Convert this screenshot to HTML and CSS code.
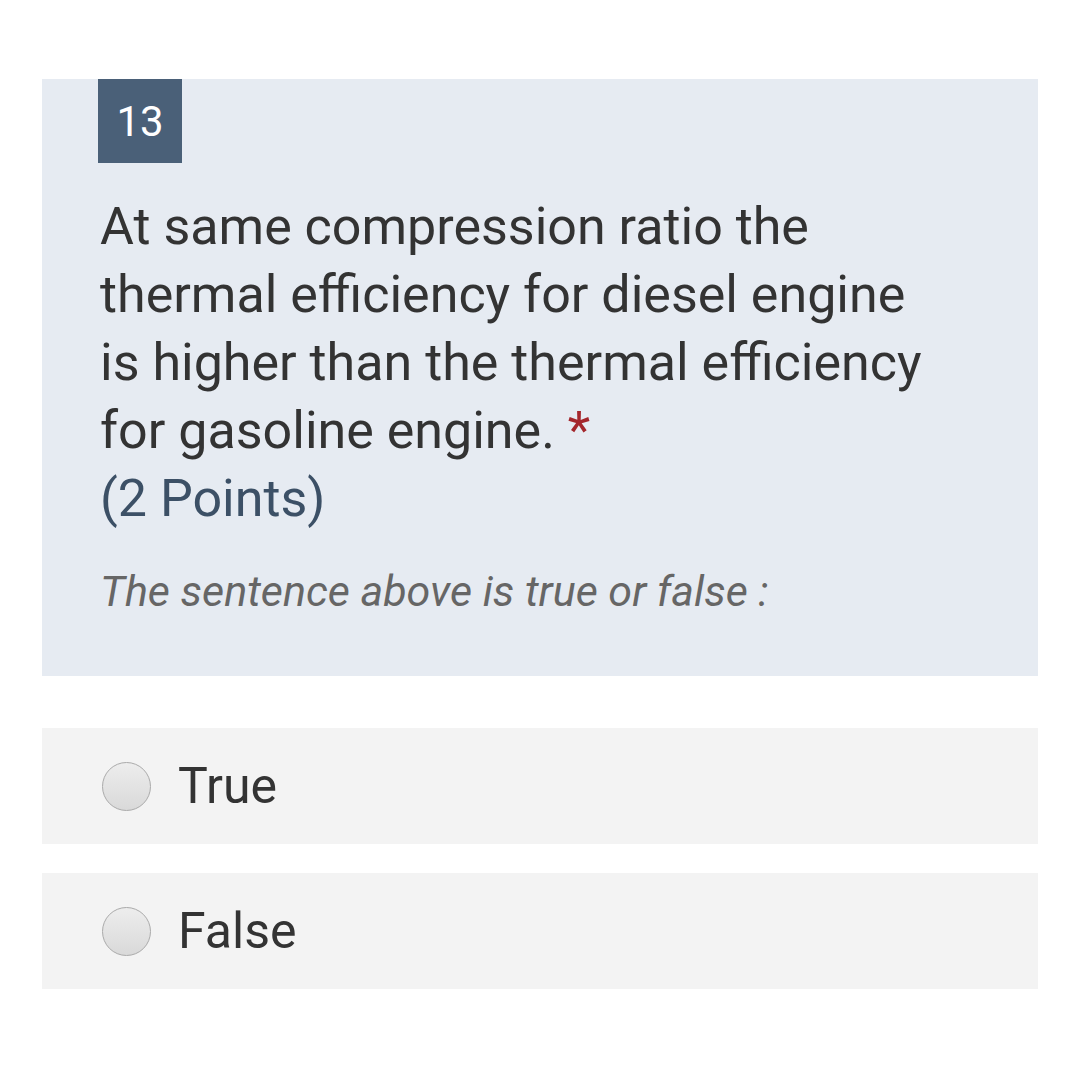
FILE: index.html
```html
<!DOCTYPE html>
<html lang="en">
  <head>
    <meta charset="UTF-8" />
    <meta name="viewport" content="width=device-width, initial-scale=1.0" />
    <title>question 13</title>
    <link rel="stylesheet" href="styles.css">
  </head>
  <body>
    <div class="question">
      <div class="number">13</div>
      <div class="title">
        At same compression ratio the thermal efficiency for diesel engine is higher than the thermal efficiency for gasoline engine.
        <span class="required">*</span>
      </div>
      <div class="points">(2 Points)</div>
      <div class="subtitle">The sentence above is true or false :</div>
    </div>
    <div class="options">
      <label class="option">
        <span class="radio"></span>
        <span class="text">True</span>
      </label>
      <label class="option">
        <span class="radio"></span>
        <span class="text">False</span>
      </label>
    </div>
  </body>
</html>
```

FILE: styles.css
```css
body {
  margin: 0;
  padding: 79px 42px 0;
  background: #fff;
  font-family: Roboto, "Liberation Sans", sans-serif;
  color: #333;
}
.question {
  background: #e6ebf2;
  padding: 0 0 60px 56px;
}
.number {
  width: 84px;
  height: 84px;
  background: #4a6078;
  color: #fff;
  font-size: 42px;
  line-height: 86px;
  text-align: center;
}
.title {
  max-width: 840px;
  margin-top: 30px;
  padding-left: 2px;
  font-size: 52px;
  line-height: 68px;
  color: #333;
}
.required {
  color: #a4262c;
}
.points {
  padding-left: 2px;
  font-size: 52px;
  line-height: 68px;
  color: #3c5066;
}
.subtitle {
  margin-top: 33px;
  padding-left: 2px;
  font-size: 43px;
  line-height: 50px;
  font-style: italic;
  color: #666;
}
.options {
  display: flex;
  flex-direction: column;
  gap: 29px;
  margin-top: 52px;
}
.option {
  display: flex;
  align-items: center;
  height: 116px;
  padding-left: 60px;
  background: #f3f3f3;
}
.radio {
  width: 47px;
  height: 47px;
  border: 1px solid #aaa;
  border-radius: 50%;
  background: linear-gradient(#ededed, #d9d9d9);
}
.text {
  margin-left: 27px;
  font-size: 50px;
  color: #333;
}
```
